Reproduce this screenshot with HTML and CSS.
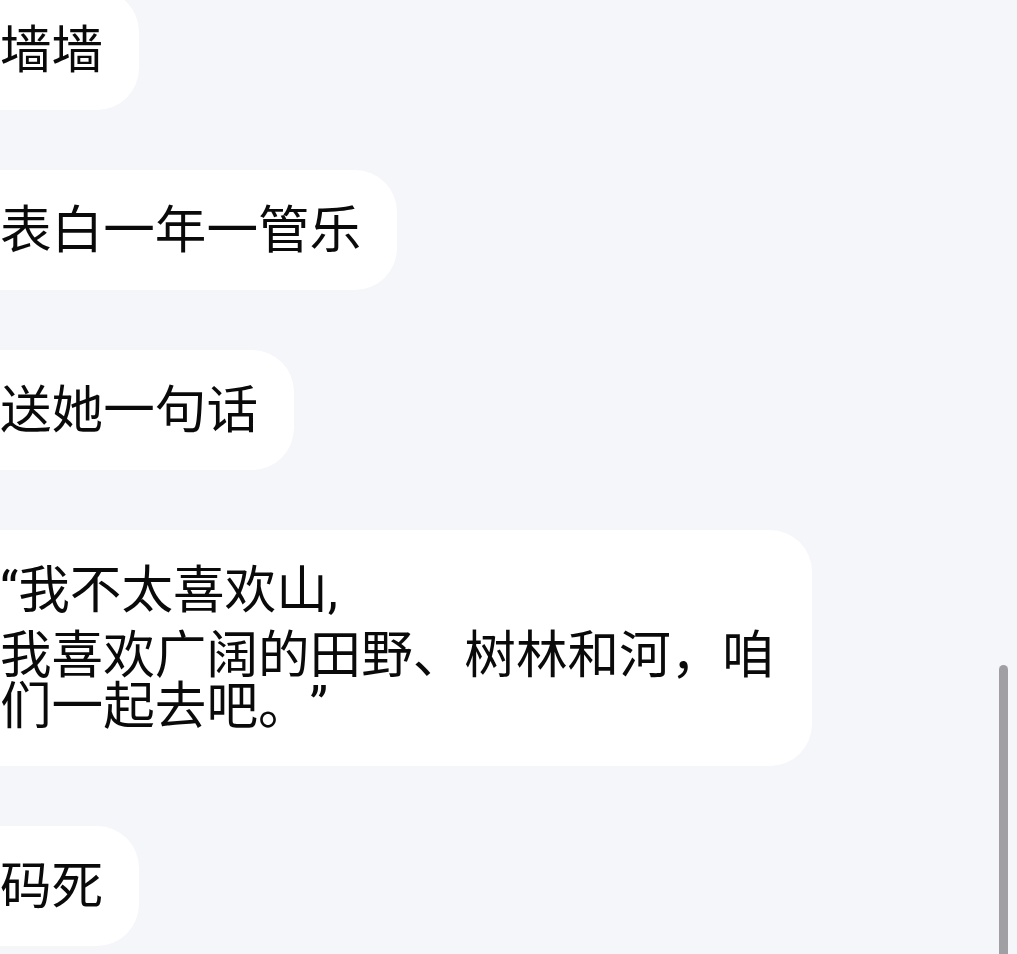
FILE: index.html
```html
<!DOCTYPE html>
<html lang="zh-CN">
<head>
<meta charset="utf-8">
<title>聊天</title>
<link rel="stylesheet" href="styles.css">
</head>
<body>
<main class="chat">
  <p class="bubble">墙墙</p>
  <p class="bubble">表白一年一管乐</p>
  <p class="bubble">送她一句话</p>
  <p class="bubble"><span class="first-line">“我不太喜欢山,</span>我喜欢广阔的田野、树林和河，咱们一起去吧。”</p>
  <p class="bubble">码死</p>
</main>
<div class="scrollbar"></div>
</body>
</html>
```

FILE: styles.css
```css
html, body {
  margin: 0;
  padding: 0;
  height: 100%;
  overflow: hidden;
  background: #f5f6fa;
}

body {
  font-family: "Roboto", "Noto Sans CJK SC", sans-serif;
  color: #0a0a0a;
}

.chat {
  display: flex;
  flex-direction: column;
  align-items: flex-start;
  gap: 60px;
  margin-left: -40px;
  margin-top: -10px;
}

.bubble {
  margin: 0;
  background: #ffffff;
  border-radius: 42px;
  padding: 35px 36px 34px 40px;
  font-size: 51.6px;
  line-height: 51px;
  max-width: 776px;
  box-sizing: content-box;
  text-spacing-trim: space-all;
}

.first-line {
  display: block;
  margin-bottom: 14px;
}

.scrollbar {
  position: fixed;
  left: 999px;
  top: 665px;
  width: 9px;
  height: 300px;
  background: #a0a0a4;
  border-radius: 5px 5px 0 0;
}
```
